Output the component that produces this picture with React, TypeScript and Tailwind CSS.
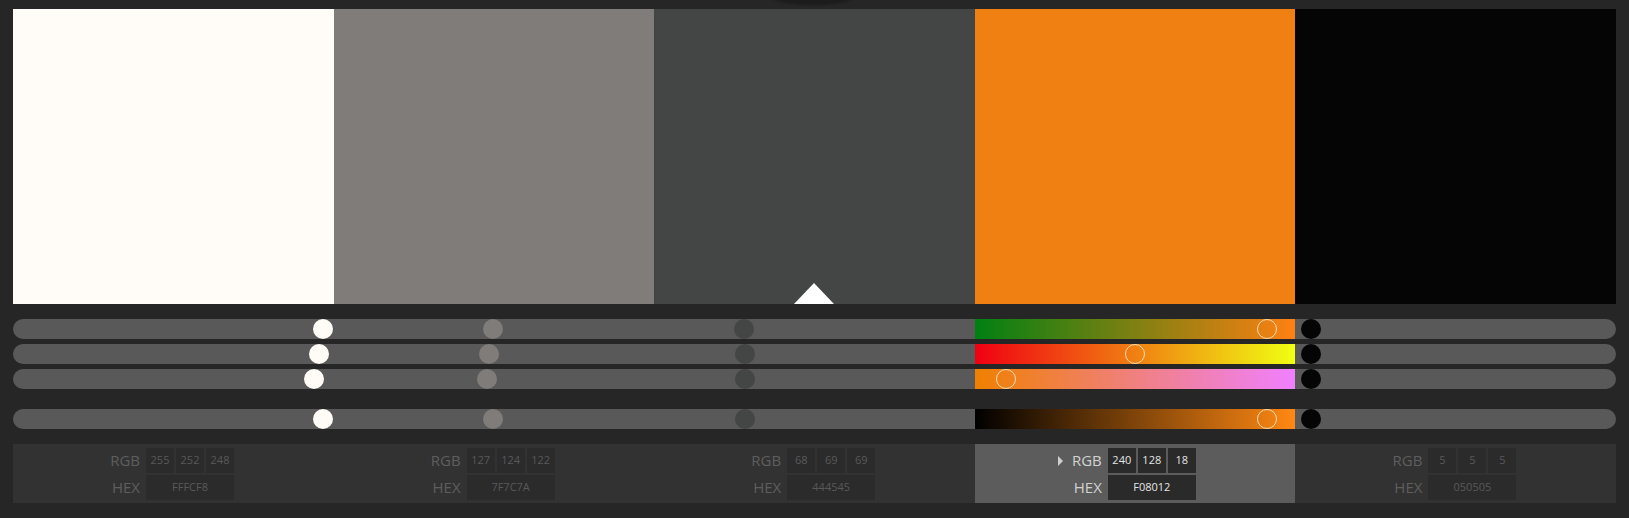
import React from "react";

type Swatch = {
  hex: string;
  rgb: [number, number, number];
  active?: boolean;
};

const swatches: Swatch[] = [
  { hex: "FFFCF8", rgb: [255, 252, 248] },
  { hex: "7F7C7A", rgb: [127, 124, 122] },
  { hex: "444545", rgb: [68, 69, 69] },
  { hex: "F08012", rgb: [240, 128, 18], active: true },
  { hex: "050505", rgb: [5, 5, 5] },
];

const swatchBg = [
  "bg-[#fffcf8]",
  "bg-[#7f7c7a]",
  "bg-[#444545]",
  "bg-[#f08012]",
  "bg-[#050505]",
];

const activeGradients = [
  "bg-[linear-gradient(to_right,rgb(0,128,18),rgb(255,128,18))]",
  "bg-[linear-gradient(to_right,rgb(240,0,18),rgb(240,255,18))]",
  "bg-[linear-gradient(to_right,rgb(240,128,0),rgb(240,128,255))]",
  "bg-[linear-gradient(to_right,rgb(0,0,0),rgb(255,136,19))]",
];

function valueFor(s: Swatch, row: number) {
  if (row < 3) return s.rgb[row];
  return Math.max(...s.rgb);
}

function SliderRow({ row }: { row: number }) {
  return (
    <div className="grid grid-cols-5 h-[20px] rounded-full bg-[#595959] overflow-hidden">
      {swatches.map((s, i) => {
        const v = valueFor(s, row);
        return (
          <div
            key={i}
            className={`relative h-full ${s.active ? activeGradients[row] : ""}`}
          >
            <div
              className={`absolute top-0 w-[20px] h-[20px] rounded-full -translate-x-1/2 ${
                s.active
                  ? "border-[1.5px] border-[#f7dcb2] bg-transparent"
                  : swatchBg[i]
              }`}
              style={{ left: `calc(10px + (100% - 21px) * ${v / 255})` }}
            />
          </div>
        );
      })}
    </div>
  );
}

function InfoCell({ s }: { s: Swatch }) {
  const labelColor = s.active ? "text-[#d2d2d2]" : "text-[#5e5e5e]";
  const boxText = s.active ? "text-[#e4e4e4]" : "text-[#595959]";
  const boxBg = s.active ? "bg-[#2a2a2a]" : "bg-[#2b2b2b]";
  return (
    <div
      className={`flex flex-col gap-[2px] pt-[4px] pb-[3px] ${
        s.active ? "bg-[#5c5c5c]" : "bg-[#323232]"
      }`}
    >
      <div className="flex items-center h-[25px]">
        <div className="w-[127px] flex items-center justify-end">
          {s.active && (
            <span className="mr-[9px] w-0 h-0 border-y-[5px] border-y-transparent border-l-[5px] border-l-[#cfcfcf]" />
          )}
          <span className={`text-[15px] leading-none ${labelColor}`}>RGB</span>
        </div>
        <div className="ml-[6px] flex gap-[2px]">
          {s.rgb.map((c, k) => (
            <div
              key={k}
              className={`w-[28px] h-[25px] flex items-center justify-center text-[11px] ${boxBg} ${boxText}`}
            >
              {c}
            </div>
          ))}
        </div>
      </div>
      <div className="flex items-center h-[25px]">
        <div className="w-[127px] flex items-center justify-end">
          <span className={`text-[15px] leading-none ${labelColor}`}>HEX</span>
        </div>
        <div
          className={`ml-[6px] w-[88px] h-[25px] flex items-center justify-center text-[11px] ${boxBg} ${boxText}`}
        >
          {s.hex}
        </div>
      </div>
    </div>
  );
}

export default function App() {
  return (
    <div className="relative w-[1629px] h-[518px] bg-[#262626] overflow-hidden pt-[9px] px-[13px] font-['Open_Sans','Liberation_Sans',sans-serif]">
      <div className="absolute left-[773px] top-[-10px] w-[80px] h-[15px] rounded-[50%] bg-[#1c1c1c] blur-[1px]" />
      <div className="grid grid-cols-5 h-[295px]">
        {swatches.map((s, i) => (
          <div key={i} className={`relative ${swatchBg[i]}`}>
            {i === 2 && (
              <div className="absolute bottom-0 left-1/2 -translate-x-1/2 w-0 h-0 border-x-[20px] border-x-transparent border-b-[21px] border-b-white" />
            )}
          </div>
        ))}
      </div>
      <div className="mt-[15px] flex flex-col gap-[5px]">
        <SliderRow row={0} />
        <SliderRow row={1} />
        <SliderRow row={2} />
      </div>
      <div className="mt-[20px]">
        <SliderRow row={3} />
      </div>
      <div className="mt-[15px] grid grid-cols-5">
        {swatches.map((s, i) => (
          <InfoCell key={i} s={s} />
        ))}
      </div>
    </div>
  );
}
